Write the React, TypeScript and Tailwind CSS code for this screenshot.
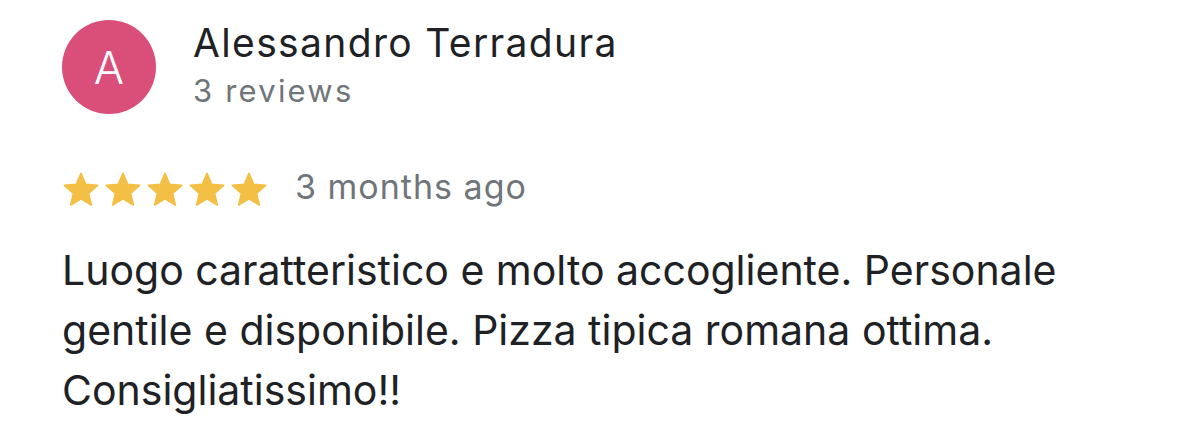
const stars = [0, 1, 2, 3, 4];

function Star() {
  return (
    <svg viewBox="0 0 24 24" className="w-[40px] h-[40px] -mx-[1px]">
      <path
        d="M12 17.27L18.18 21l-1.64-7.03L22 9.24l-7.19-.61L12 2 9.19 8.63 2 9.24l5.46 4.73L5.82 21z"
        fill="#f3bf45"
        stroke="#f3bf45"
        strokeWidth="1"
        strokeLinejoin="round"
      />
    </svg>
  );
}

export default function App() {
  return (
    <div className="w-[1200px] h-[430px] bg-white overflow-hidden font-['Inter',sans-serif] pl-[62px] pt-[19px]">
      {/* Author */}
      <div className="flex items-center">
        <div className="w-[94px] h-[94px] rounded-full bg-[#d94f79] flex items-center justify-center text-white text-[45px] font-light leading-none">
          A
        </div>
        <div className="ml-[37px]">
          <div className="text-[39px] leading-[48px] tracking-[1.35px] text-[#202124]">Alessandro Terradura</div>
          <div className="text-[31px] leading-[48px] tracking-[2.2px] text-[#70757a]">3 reviews</div>
        </div>
      </div>

      {/* Rating */}
      <div className="flex items-center mt-[55px]">
        <div className="flex items-center gap-[4px]">
          {stars.map((s) => (
            <Star key={s} />
          ))}
        </div>
        <span className="ml-[27px] -mt-[6px] text-[34px] leading-[40px] tracking-[1px] text-[#70757a]">
          3 months ago
        </span>
      </div>

      {/* Body */}
      <p className="mt-[30px] w-[1040px] text-[41px] leading-[60px] text-[#202124]">
        Luogo caratteristico e molto accogliente. Personale gentile e disponibile. Pizza tipica romana ottima.
        Consigliatissimo!!
      </p>
    </div>
  );
}
